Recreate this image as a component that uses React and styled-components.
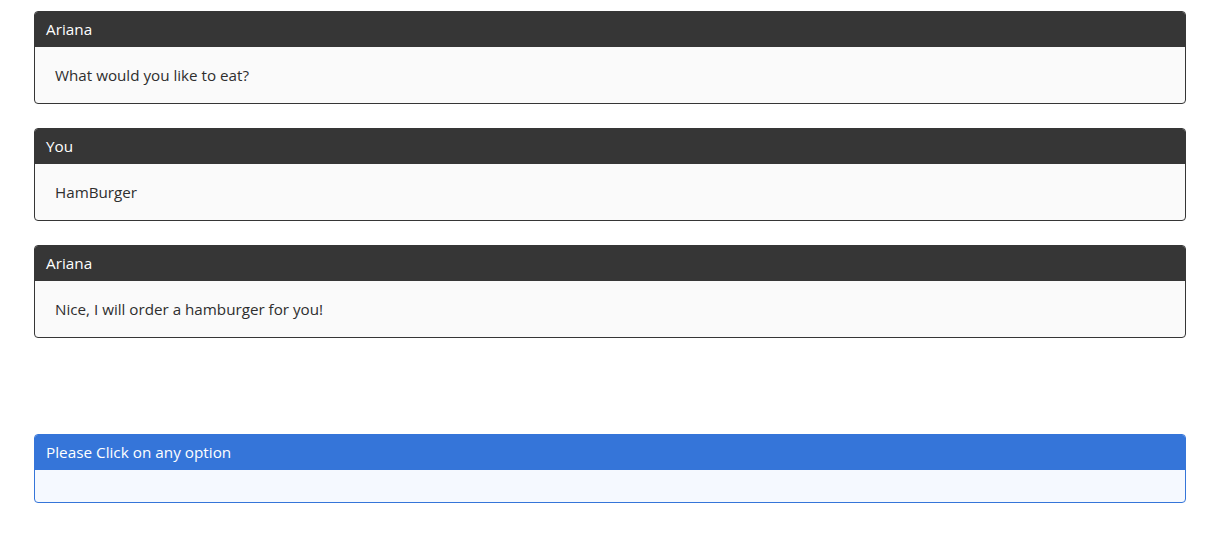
import React from "react";
import styled, { createGlobalStyle } from "styled-components";

const GlobalStyle = createGlobalStyle`
  body {
    margin: 0;
    background: #ffffff;
    font-family: "Open Sans", "Noto Sans", sans-serif;
  }
`;

const Page = styled.div`
  padding: 11px 41px 0 34px;
  display: flex;
  flex-direction: column;
`;

const Chat = styled.div`
  display: flex;
  flex-direction: column;
  gap: 24px;
`;

const Card = styled.div`
  border: 1px solid ${(p) => (p.$variant === "options" ? "#3575d9" : "#363636")};
  border-radius: 4px;
  overflow: hidden;
  background: ${(p) => (p.$variant === "options" ? "#f5f9ff" : "#fafafa")};
  margin-top: ${(p) => (p.$variant === "options" ? "96px" : "0")};
`;

const Header = styled.div`
  height: 35px;
  display: flex;
  align-items: center;
  padding: 0 11px 2px;
  box-sizing: border-box;
  background: ${(p) => (p.$variant === "options" ? "#3575d9" : "#363636")};
  color: #ffffff;
  font-size: 15.3px;
`;

const Body = styled.div`
  height: ${(p) => (p.$empty ? "32px" : "56px")};
  display: flex;
  align-items: center;
  padding: 0 20px;
  box-sizing: border-box;
  color: #2e2e2e;
  font-size: 15.2px;
`;

const messages = [
  { from: "Ariana", text: "What would you like to eat?" },
  { from: "You", text: "HamBurger" },
  { from: "Ariana", text: "Nice, I will order a hamburger for you!" },
];

export default function App() {
  return (
    <>
      <GlobalStyle />
      <Page>
        <Chat>
          {messages.map((m, i) => (
            <Card key={i}>
              <Header>{m.from}</Header>
              <Body>{m.text}</Body>
            </Card>
          ))}
        </Chat>
        <Card $variant="options">
          <Header $variant="options">Please Click on any option</Header>
          <Body $empty />
        </Card>
      </Page>
    </>
  );
}
